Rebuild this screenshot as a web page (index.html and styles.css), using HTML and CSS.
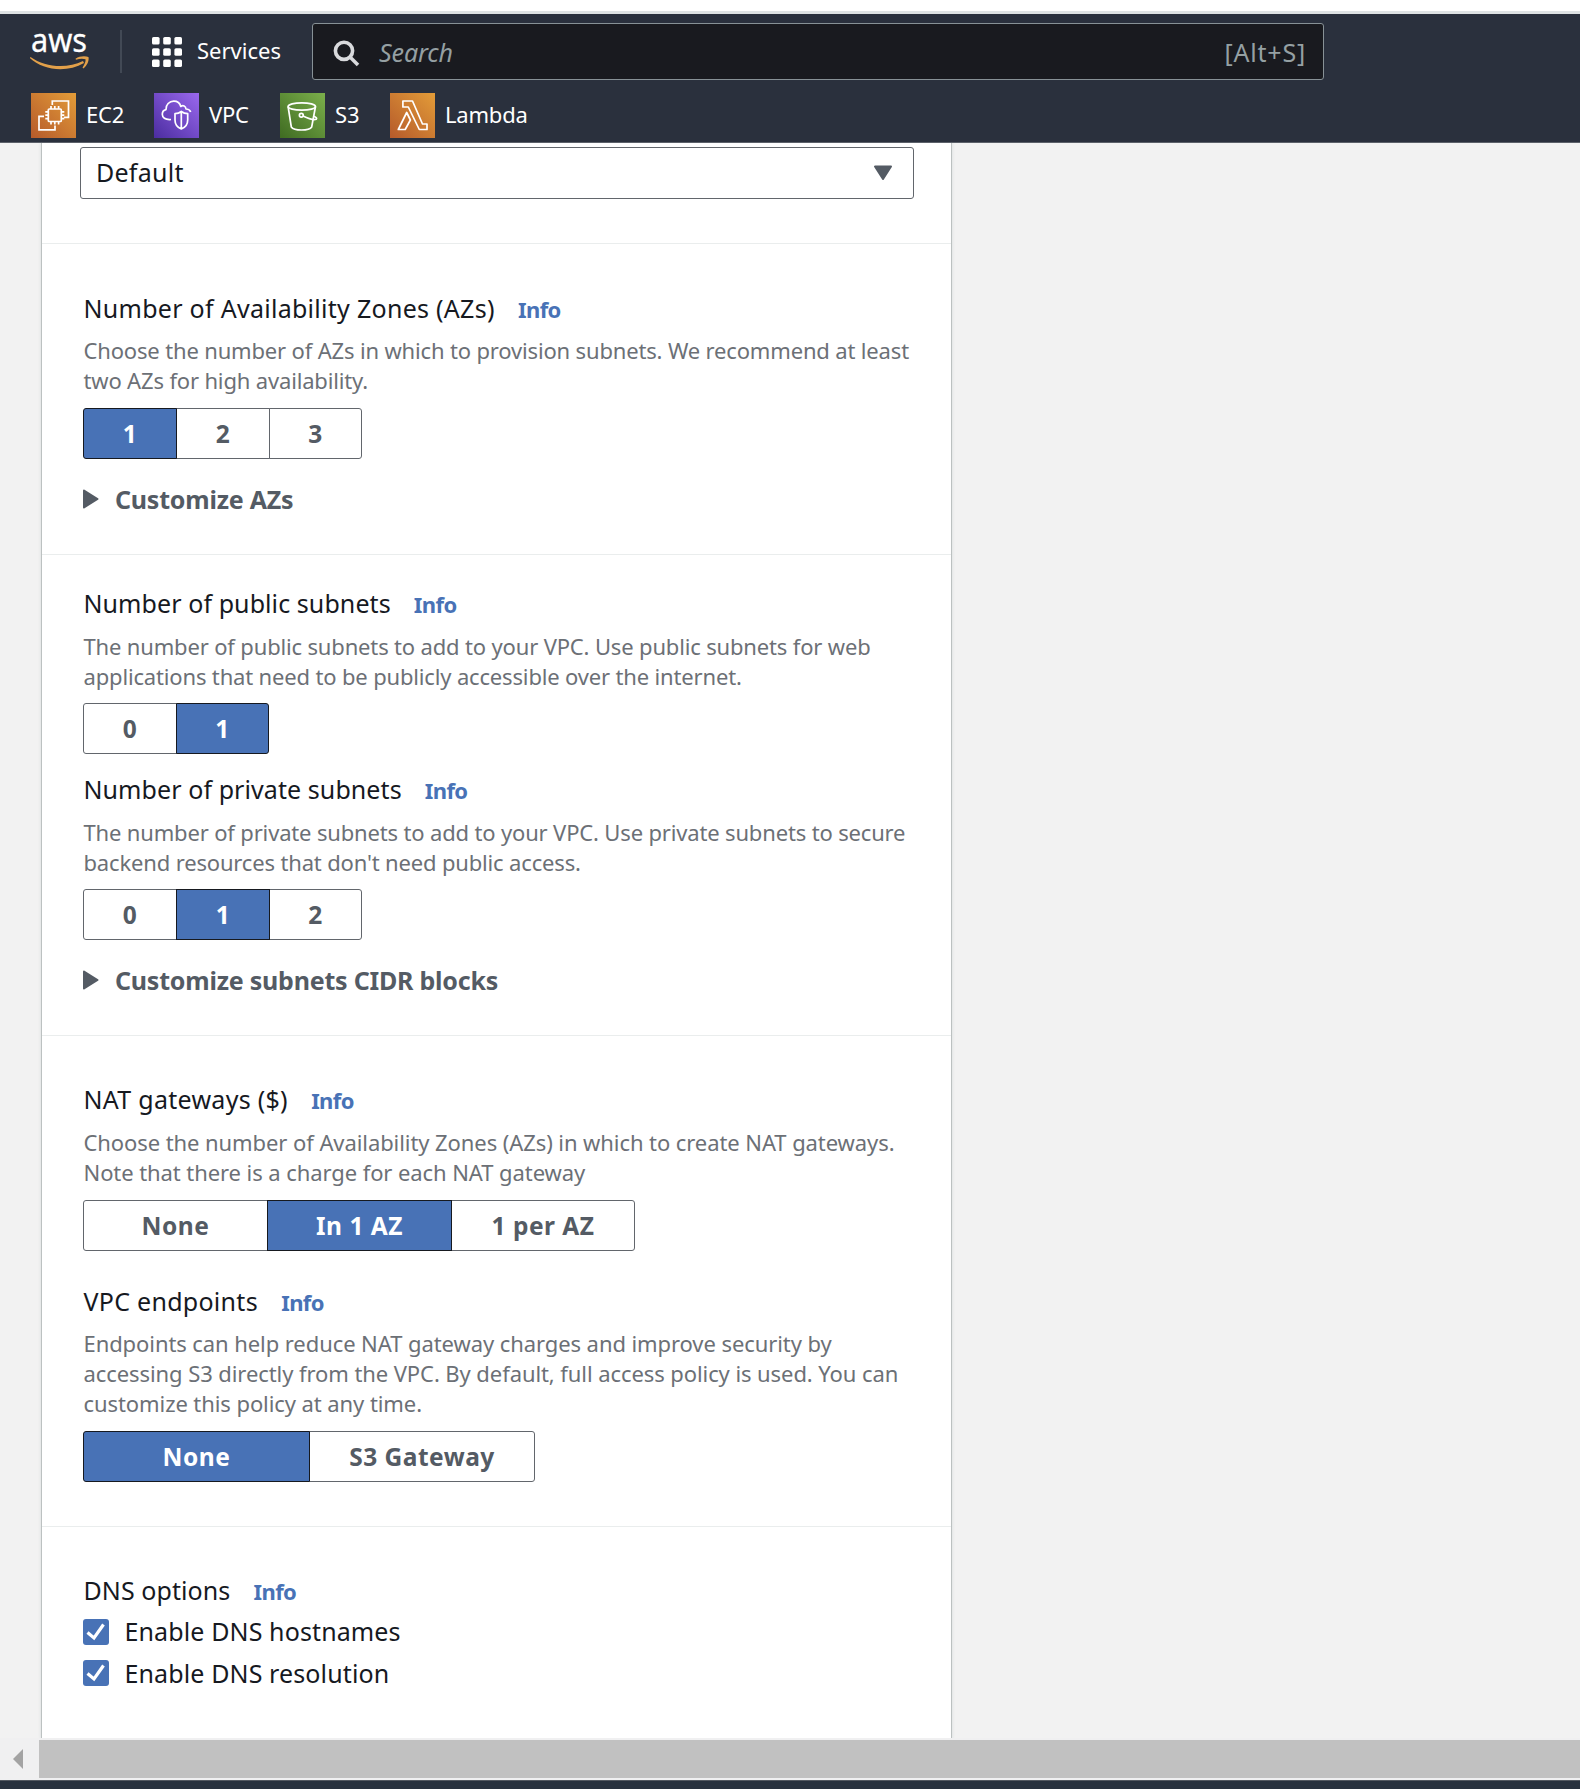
FILE: index.html
```
<!DOCTYPE html>
<html lang="en">
<head>
<meta charset="utf-8">
<title>Create VPC</title>
<link rel="stylesheet" href="styles.css">
</head>
<body>
<header class="topnav">
  <div class="nav-main">
    <svg class="aws-logo" width="62" height="56" viewBox="0 -12 62 56">
      <text class="aws-word" x="2" y="23" textLength="56" lengthAdjust="spacingAndGlyphs">aws</text>
      <path d="M1.500 28 C16 38.500 38 40 54 32 L55 34 C38 44 14 41.500 .8 29 Z M46.500 29.700 C50.500 27 56 26.700 59.500 28 C60.300 32 58 36.500 54.500 39.500 L53.500 38.500 C55.500 35.500 57 32.500 56.500 30.300 C54 29.400 50 29.700 47 30.800 Z" fill="#e2a04a"/>
    </svg>
    <span class="nav-divider"></span>
    <svg class="grid-icon" width="30" height="30" viewBox="0 0 30 30" fill="#fff">
      <rect width="7.600" height="7.600" rx="1.600"/><rect x="11.200" width="7.600" height="7.600" rx="1.600"/><rect x="22.400" width="7.600" height="7.600" rx="1.600"/>
      <rect y="11.200" width="7.600" height="7.600" rx="1.600"/><rect x="11.200" y="11.200" width="7.600" height="7.600" rx="1.600"/><rect x="22.400" y="11.200" width="7.600" height="7.600" rx="1.600"/>
      <rect y="22.400" width="7.600" height="7.600" rx="1.600"/><rect x="11.200" y="22.400" width="7.600" height="7.600" rx="1.600"/><rect x="22.400" y="22.400" width="7.600" height="7.600" rx="1.600"/>
    </svg>
    <span class="services">Services</span>
    <div class="search">
      <svg width="27" height="27" viewBox="0 0 27 27" fill="none" stroke="#d9dadd" stroke-width="3.600"><circle cx="11" cy="10.800" r="8.600"/><path d="M17 17 L25 25"/></svg>
      <span class="search-hint">Search</span>
      <span class="search-key">[Alt+S]</span>
    </div>
  </div>
  <nav class="favorites">
    <a class="fav fav-ec2"><svg width="45" height="45" viewBox="0 0 45 45"><defs><linearGradient id="orange" x1="0" y1="1" x2="1" y2="0"><stop offset="0" stop-color="#b55a2b"/><stop offset="1" stop-color="#e39c38"/></linearGradient></defs><rect width="45" height="45" fill="url(#orange)"/>
      <g fill="none" stroke="#fff" stroke-width="1.700"><path d="M21.300 12 V8 H37.500 V24.300 H32.800 M13 23.300 H8 V36.800 H24 V32.500"/><rect x="17.300" y="16" width="13" height="12.500" rx="1"/><path d="M20 16 V13 M23.800 16 V13 M27.600 16 V13 M20 31.500 V28.500 M23.800 31.500 V28.500 M27.600 31.500 V28.500 M14.300 18.800 H17.300 M14.300 22.200 H17.300 M14.300 25.700 H17.300 M30.300 18.800 H33.300 M30.300 22.200 H33.300 M30.300 25.700 H33.300"/></g></svg><span>EC2</span></a>
    <a class="fav fav-vpc"><svg width="45" height="45" viewBox="0 0 45 45"><defs><linearGradient id="purple" x1="0" y1="1" x2="1" y2="0"><stop offset="0" stop-color="#4b2da0"/><stop offset="1" stop-color="#9a68ee"/></linearGradient></defs><rect width="45" height="45" fill="url(#purple)"/>
      <g fill="none" stroke="#fff" stroke-width="1.700" stroke-linejoin="round"><path d="M17 26.500 C11 27 8.300 24.500 8.300 21.300 C8.300 18.500 10.200 17 12 16.600 C11.600 11.500 15.500 8.200 19.800 8.200 C23.500 8.200 26 10.500 26.800 13.500 C29 11.800 31.800 13 32 16 C34.500 16 36 17.200 36.700 19"/><path d="M27.300 18.500 C25.500 20 23.300 20.700 21 20.700 V27 C21 31.500 23.500 34.500 27.300 36 C31.200 34.500 33.700 31.500 33.700 27 V20.700 C31.300 20.700 29.200 20 27.300 18.500 Z M27.300 18.500 V36"/></g></svg><span>VPC</span></a>
    <a class="fav fav-s3"><svg width="45" height="45" viewBox="0 0 45 45"><defs><linearGradient id="green" x1="0" y1="1" x2="1" y2="0"><stop offset="0" stop-color="#3f6b22"/><stop offset="1" stop-color="#7baf4b"/></linearGradient></defs><rect width="45" height="45" fill="url(#green)"/>
      <g fill="none" stroke="#fff" stroke-width="1.700"><ellipse cx="21.800" cy="13.500" rx="13.700" ry="3.700"/><path d="M8.100 13.500 L11.300 34 C14 38 29 38 31.700 34 L35.500 13.500"/><circle cx="21.300" cy="22.200" r="1.900"/><path d="M23 23 C27 25 33 27.500 36.300 26.200 C37.300 25.300 35.500 24 33.800 23.300"/></g></svg><span>S3</span></a>
    <a class="fav fav-lambda"><svg width="45" height="45" viewBox="0 0 45 45"><rect width="45" height="45" fill="url(#orange)"/>
      <g fill="none" stroke="#fff" stroke-width="1.700" stroke-linejoin="round"><path d="M12.900 8 H22.500 L32.500 31 H37 V36.500 H29.300 L18.300 14 H12.900 Z M16.700 19.500 L20.400 27 L15.200 36.500 H8.300 Z"/></g></svg><span>Lambda</span></a>
  </nav>
</header>

<main class="viewport">
  <div class="panel">
    <section class="sec sec-tenancy">
      <div class="select"><span>Default</span><svg width="20" height="16" viewBox="0 0 20 16"><path d="M2 1.500 H18 L10 14 Z" fill="#545b64" stroke="#545b64" stroke-width="2" stroke-linejoin="round"/></svg></div>
    </section>

    <section class="sec sec-az">
      <h3 class="label wide">Number of Availability Zones (AZs) <a class="info">Info</a></h3>
      <p class="desc desc-az">Choose the number of AZs in which to provision subnets. We recommend at least<br>two AZs for high availability.</p>
      <div class="segments"><button class="seg on">1</button><button class="seg">2</button><button class="seg">3</button></div>
      <div class="expand"><svg width="16" height="20" viewBox="0 0 16 20"><path d="M1 1.500 L14.500 10 L1 18.500 Z" fill="#545b64" stroke="#545b64" stroke-width="2" stroke-linejoin="round"/></svg><span>Customize AZs</span></div>
    </section>

    <section class="sec sec-subnets">
      <h3 class="label">Number of public subnets <a class="info">Info</a></h3>
      <p class="desc">The number of public subnets to add to your VPC. Use public subnets for web<br>applications that need to be publicly accessible over the internet.</p>
      <div class="segments"><button class="seg">0</button><button class="seg on">1</button></div>
      <h3 class="label label-private">Number of private subnets <a class="info">Info</a></h3>
      <p class="desc">The number of private subnets to add to your VPC. Use private subnets to secure<br>backend resources that don't need public access.</p>
      <div class="segments"><button class="seg">0</button><button class="seg on">1</button><button class="seg">2</button></div>
      <div class="expand"><svg width="16" height="20" viewBox="0 0 16 20"><path d="M1 1.500 L14.500 10 L1 18.500 Z" fill="#545b64" stroke="#545b64" stroke-width="2" stroke-linejoin="round"/></svg><span>Customize subnets CIDR blocks</span></div>
    </section>

    <section class="sec sec-nat">
      <h3 class="label wide">NAT gateways ($) <a class="info">Info</a></h3>
      <p class="desc loose">Choose the number of Availability Zones (AZs) in which to create NAT gateways.<br>Note that there is a charge for each NAT gateway</p>
      <div class="segments segments-nat"><button class="seg">None</button><button class="seg on">In 1 AZ</button><button class="seg">1 per AZ</button></div>
      <h3 class="label wide label-endpoints">VPC endpoints <a class="info">Info</a></h3>
      <p class="desc loose">Endpoints can help reduce NAT gateway charges and improve security by<br>accessing S3 directly from the VPC. By default, full access policy is used. You can<br>customize this policy at any time.</p>
      <div class="segments segments-endpoints"><button class="seg on">None</button><button class="seg">S3 Gateway</button></div>
    </section>

    <section class="sec sec-dns">
      <h3 class="label">DNS options <a class="info">Info</a></h3>
      <div class="check"><svg width="26" height="26" viewBox="0 0 26 26"><rect width="26" height="26" rx="3" fill="#4872b6"/><path d="M4.500 13.500 L11 19 L20.500 5.500" fill="none" stroke="#fff" stroke-width="3.200"/></svg><span>Enable DNS hostnames</span></div>
      <div class="check"><svg width="26" height="26" viewBox="0 0 26 26"><rect width="26" height="26" rx="3" fill="#4872b6"/><path d="M4.500 13.500 L11 19 L20.500 5.500" fill="none" stroke="#fff" stroke-width="3.200"/></svg><span>Enable DNS resolution</span></div>
    </section>
  </div>
</main>

<div class="scrollbar">
  <span class="scroll-arrow"></span>
  <span class="scroll-thumb"></span>
</div>
<footer class="footer"></footer>
</body>
</html>
```
FILE: styles.css
```
* { box-sizing: border-box; }
body {
  margin: 0;
  height: 1789px;
  display: flex;
  flex-direction: column;
  overflow: hidden;
  background: #fff;
  color: #16191f;
  font: 25px/30px "Noto Sans", "Open Sans", sans-serif;
}
svg { display: block; flex: none; }

.topnav {
  flex: none;
  height: 132px;
  margin-top: 11px;
  border-top: 3px solid #dee2e4;
  border-bottom: 1px solid #5c616a;
  background: #2a303d;
  color: #fff;
}
.nav-main { display: flex; align-items: flex-start; height: 79px; padding: 9px 0 0 29px; }
.aws-logo { margin-top: -6px; }
.aws-word { font: 400 33px "Noto Sans", sans-serif; fill: #fff; stroke: #fff; stroke-width: 0.3px; }
.nav-divider { width: 2px; height: 43px; margin: 7px 0 0 29px; background: #424955; }
.grid-icon { margin: 14px 0 0 30px; }
.services { width: 115px; margin: 12px 0 0 15px; font-size: 22px; }
.search {
  display: flex;
  width: 1012px;
  height: 57px;
  padding: 0 17px 0 20px;
  border: 1px solid #879196;
  border-radius: 3px;
  background: #191a1f;
  color: #95a0a3;
}
.search svg { margin-top: 16px; }
.search-hint { margin: 13px 0 0 19px; font-size: 25px; font-style: italic; letter-spacing: -0.1px; }
.search-key { margin: 13px 0 0 auto; letter-spacing: 0.8px; }

.favorites { display: flex; padding-left: 31px; }
.fav { display: flex; gap: 10px; font-size: 22px; line-height: 43px; letter-spacing: -0.2px; }
.fav-ec2 { width: 123px; }
.fav-vpc { width: 126px; }
.fav-s3 { width: 110px; }

.viewport { flex: none; height: 1595px; padding-left: 42px; background: #f2f2f2; overflow: hidden; }
.panel {
  width: 909px;
  height: 1595px;
  background: #fff;
  box-shadow: -1px 0 0 #bcc1c1, 1px 0 0 #bcc1c1, 0 0 3px 1px #d5dbdb;
}
.sec { padding-left: 41px; border-bottom: 1px solid #eaeded; }
.sec-tenancy { height: 101px; padding: 4px 0 0 38px; }
.sec-az { height: 311px; padding-top: 49px; }
.sec-subnets { height: 481px; padding-top: 33px; }
.sec-nat { height: 491px; padding-top: 48px; }
.sec-dns { border-bottom: 0; padding-top: 48px; }

.select {
  display: flex;
  align-items: center;
  justify-content: space-between;
  width: 834px;
  height: 52px;
  padding: 0 20px 0 15px;
  border: 1px solid #62666c;
  border-radius: 3px;
  letter-spacing: 0.25px;
}
.select span { padding-bottom: 2px; }
.label { margin: 0; padding-left: 0.5px; font-size: 25px; font-weight: 400; letter-spacing: 0.08px; white-space: nowrap; }
.wide { letter-spacing: 0.28px; }
.info { margin-left: 16.5px; font-size: 22px; font-weight: 700; letter-spacing: -0.6px; color: #4872b6; }
.desc { margin: 12px 0; padding-left: 0.5px; font-size: 22px; letter-spacing: -0.16px; color: #6c7076; white-space: nowrap; }
.desc-az { margin: 11px 0 13px; }
.loose { margin-bottom: 13px; letter-spacing: -0.08px; }
.label-private { margin-top: 20px; }
.label-endpoints { margin-top: 35px; }
.label-endpoints + .loose { margin-top: 11px; }

.segments { display: flex; width: 280px; }
.seg {
  flex: none;
  width: 94px;
  height: 51px;
  margin: 0 -1px 0 0;
  padding: 0;
  border: 1px solid #62666c;
  background: #fff;
  color: #545b64;
  font: 700 24.5px/46px "Noto Sans", sans-serif;
  letter-spacing: 0.5px;
}
.seg:first-child { border-radius: 3px 0 0 3px; }
.seg:last-child { width: 93px; border-radius: 0 3px 3px 0; }
.seg.on { position: relative; border-color: #16191f; background: #4872b6; color: #fff; }
.segments-nat .seg { width: 185px; }
.segments-nat .seg:last-child { width: 184px; }
.segments-endpoints .seg { width: 227px; }
.segments-endpoints .seg:last-child { width: 226px; }

.expand { display: flex; align-items: center; gap: 16px; margin-top: 25px; font-weight: 700; letter-spacing: -0.22px; color: #545b64; }
.check { display: flex; gap: 15.5px; height: 41px; padding-top: 12px; letter-spacing: 0.12px; }
.check svg { margin-top: 1px; }
.check span { margin-top: -2px; }
.check + .check span { margin-top: -1px; }

.scrollbar { flex: none; display: flex; height: 42px; padding: 2px 0 2px 13px; background: #f0f0f1; }
.scroll-arrow { width: 0; height: 0; margin: 9px 16px 0 0; border: solid transparent; border-width: 10px 10px 10px 0; border-right-color: #a3a3a3; }
.scroll-thumb { flex: 1; background: #c1c1c1; }
.footer { flex: 1; border-top: 1px solid #545961; background: #28313e; }
```
